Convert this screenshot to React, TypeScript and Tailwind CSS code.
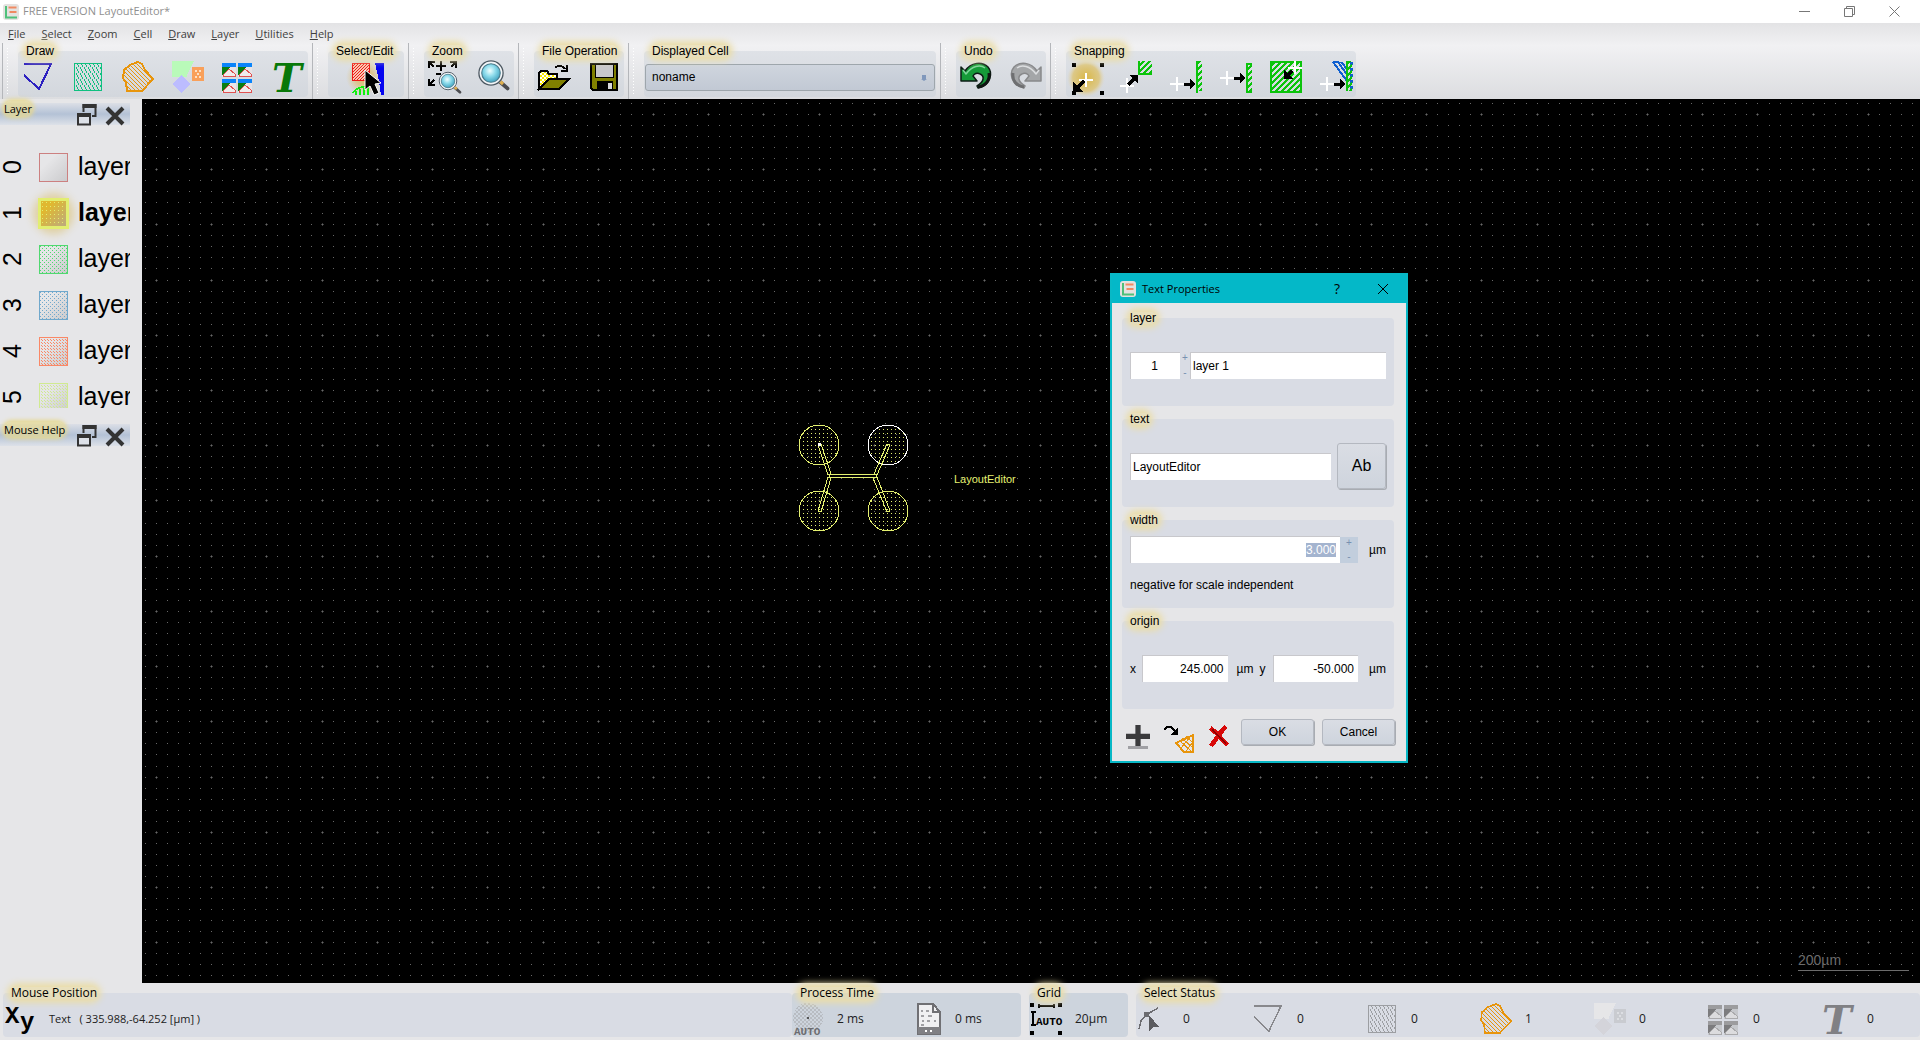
import React, { useEffect, useRef } from "react";

const ui = "font-['Liberation_Sans',Arial,sans-serif]";
const sys = "font-['Open_Sans','Noto_Sans',sans-serif]";

const PITCH = 11.045;

const dots: string[] = [];
const arms: string[] = [];
for (let j = 0; j < 120; j++) {
  for (let i = 0; i < 240; i++) {
    const x = Math.floor(3.4 + i * PITCH);
    const y = Math.floor(4.3 + j * PITCH);
    dots.push(`M${x} ${y}h1v1h-1z`);
    if (i % 5 === 1 && j % 5 === 1) {
      arms.push(`M${x - 1} ${y}h3v1h-3zM${x} ${y - 1}h1v3h-1z`);
    }
  }
}
const dotPath = dots.join("");
const armPath = arms.join("");

type IconProps = { children: React.ReactNode; className?: string };

const Icon = ({ children, className = "size-8" }: IconProps) => (
  <svg
    viewBox="0 0 32 32"
    fill="none"
    shapeRendering="crispEdges"
    aria-hidden="true"
    className={`shrink-0 overflow-visible ${className}`}
  >
    {children}
  </svg>
);

const Logo = () => (
  <svg viewBox="0 0 16 16" className="size-4 shrink-0" aria-hidden="true">
    <rect x="0" y="0" width="16" height="16" rx="3" fill="#e4e2e0" />
    <path d="M3 2v11.500h11" stroke="#4fc07a" strokeWidth="2" fill="none" />
    <path d="M5.500 3.500h8M6.500 8h7" stroke="#f08a62" strokeWidth="2" />
  </svg>
);

const Tri = ({ color, width }: { color: string; width: number }) => (
  <Icon>
    <path d="M2 3H29L17 28L2 14" stroke={color} strokeWidth={width} />
  </Icon>
);

const Hatch = ({ color, id }: { color: string; id: string }) => (
  <Icon>
    <pattern id={id} width="4" height="6" patternUnits="userSpaceOnUse">
      <path d="M0 0h1v2h-1zM1 2h1v2h-1zM2 4h1v2h-1z" fill={color} />
    </pattern>
    <rect x="2" y="2" width="28" height="28" fill={`url(#${id})`} />
    <rect x="2.5" y="2.5" width="27" height="27" stroke={color} />
  </Icon>
);

const Poly = ({ id, width }: { id: string; width: number }) => (
  <Icon>
    <pattern id={id} width="4" height="4" patternUnits="userSpaceOnUse">
      <path d="M0 0h1v1h-1zM1 1h1v1h-1zM2 2h1v1h-1zM3 3h1v1h-1z" fill="#e8950c" />
    </pattern>
    <path
      d="M2 9L8 4L16 1L20 3L23 9L31 18L20 30H5L4 22L1 17Z"
      fill={`url(#${id})`}
      stroke="#e8950c"
      strokeWidth={width}
    />
  </Icon>
);

const CellRef = ({ gray }: { gray?: boolean }) => (
  <Icon>
    <path d="M0 0H22L15 14V16H0Z" fill={gray ? "#e6e6e8" : "#b9fab9"} />
    <rect x="20" y="6" width="12" height="14" fill={gray ? "#c9cbd0" : "#f9a05a"} />
    <path
      d="M23 9h2v2h-2zM27 9h2v2h-2zM25 12h2v2h-2zM23 15h2v2h-2zM27 15h2v2h-2z"
      fill={gray ? "#dcdee2" : "#fde0c4"}
    />
    <path d="M9 14L18 23L9 32L0 23Z" fill={gray ? "#d4d4da" : "#bcbcff"} />
  </Icon>
);

const CellArray = ({ gray }: { gray?: boolean }) => (
  <Icon>
    {[
      [0, 2],
      [16, 2],
      [0, 18],
      [16, 18],
    ].map(([x, y]) => (
      <g key={`${x}-${y}`} transform={`translate(${x} ${y})`}>
        <rect width="14" height="14" fill={gray ? "#c6c8cc" : "#e8e4e6"} />
        <rect width="14" height="4" fill={gray ? "#9c9c9e" : "#0a84fa"} />
        <path d="M0 4H8L0 12Z" fill={gray ? "#7c7c7e" : "#0a7d12"} />
        <path
          d="M1 13H13V11L7 6L1 12Z"
          fill={gray ? "#dcdcde" : "#f0ecec"}
          stroke={gray ? "#aaaaac" : "#e05252"}
        />
      </g>
    ))}
  </Icon>
);

const TextT = ({ color }: { color: string }) => (
  <Icon>
    <text
      x="0"
      y="31"
      fontSize="40"
      fontWeight="bold"
      fontStyle="italic"
      fontFamily="DejaVu Serif, serif"
      fill={color}
    >
      T
    </text>
  </Icon>
);

const SelectIcon = () => (
  <Icon>
    <defs>
      <radialGradient id="selGlow">
        <stop offset="0" stopColor="#d8b860" />
        <stop offset="0.5" stopColor="#dcc07c" stopOpacity="0.8" />
        <stop offset="1" stopColor="#e0c890" stopOpacity="0" />
      </radialGradient>
      <pattern id="selHatch" width="3" height="3" patternUnits="userSpaceOnUse">
        <path d="M2 0h1v1h-1zM1 1h1v1h-1zM0 2h1v1h-1z" fill="#f01818" />
      </pattern>
    </defs>
    <circle cx="12" cy="16" r="18" fill="url(#selGlow)" />
    <rect x="0.5" y="2.5" width="17" height="17" fill="#f8c8b0" />
    <rect x="0.5" y="2.5" width="17" height="17" fill="url(#selHatch)" stroke="#f01818" />
    <path d="M23 2H32V34H29L27 20Z" fill="#0505f0" />
    <path d="M0 32Q8 24 16 26M4 30v4M8 28v6M12 27v7M16 26v8" stroke="#10f010" strokeWidth="1.5" />
    <path
      d="M13 9V29L18 25L22 34L27 32L23 23L29 22Z"
      fill="#000"
      stroke="#fff"
      strokeWidth="1"
      shapeRendering="auto"
    />
  </Icon>
);

const Lens = ({ x, y, r }: { x: number; y: number; r: number }) => (
  <g shapeRendering="auto">
    <path
      d={`M${x + r * 0.7} ${y + r * 0.7}L${x + r * 1.5} ${y + r * 1.4}`}
      stroke="#4c4c50"
      strokeWidth={r * 0.35}
      strokeLinecap="round"
    />
    <path
      d={`M${x + r * 0.8} ${y + r * 0.75}L${x + r * 1.1} ${y + r}`}
      stroke="#e0b050"
      strokeWidth={r * 0.3}
    />
    <circle cx={x} cy={y} r={r} fill="url(#lens)" stroke="#f4f6f8" strokeWidth={r * 0.3} />
    <circle cx={x} cy={y} r={r * 1.1} stroke="#4c5862" strokeWidth={r * 0.12} />
    <circle cx={x} cy={y} r={r * 0.84} stroke="#4c7c8c" strokeWidth={r * 0.1} />
  </g>
);

const ZoomFit = () => (
  <Icon>
    <defs>
      <radialGradient id="lens" cx="0.45" cy="0.4">
        <stop offset="0" stopColor="#f2ffff" />
        <stop offset="0.5" stopColor="#8edcec" />
        <stop offset="1" stopColor="#4aa8c4" />
      </radialGradient>
    </defs>
    <path
      d="M1 7V1H7M1 1L6 6M22 1H28V7M28 1L23 6M1 18V24H7M1 24L6 19M13 0V10M8 5H18M8 13H13"
      stroke="#000"
      strokeWidth="2"
    />
    <Lens x={20} y={20} r={8} />
  </Icon>
);

const ZoomIcon = () => (
  <Icon>
    <Lens x={13} y={12} r={11} />
  </Icon>
);

const OpenIcon = () => (
  <Icon>
    <pattern id="openDots" width="4" height="4" patternUnits="userSpaceOnUse">
      <rect width="4" height="4" fill="#fff" />
      <path d="M0 0h2v2h-2zM2 2h2v2h-2z" fill="#f8e800" />
    </pattern>
    <path d="M1 28V12L3 10H9L11 13H19V18H11L1 28Z" fill="url(#openDots)" stroke="#000" strokeWidth="2" />
    <path d="M1 28L11 18H31L21 28Z" fill="#808000" stroke="#000" strokeWidth="2" />
    <path d="M17 7Q22 2 27 8M29 4V10H23" stroke="#000" strokeWidth="2" />
  </Icon>
);

const SaveIcon = () => (
  <Icon>
    <path d="M3 3H29V29H5L3 27Z" fill="#808000" stroke="#000" strokeWidth="2" />
    <path d="M7 3H25V16H7Z" fill="#c8c8cc" stroke="#000" />
    <path d="M9 20H25V29H9Z" fill="#000" />
    <rect x="20" y="22" width="4" height="6" fill="#d8d8dc" />
  </Icon>
);

const UndoIcon = ({ redo }: { redo?: boolean }) => (
  <Icon>
    <g
      transform={redo ? "translate(32 0) scale(-1 1)" : undefined}
      shapeRendering="auto"
      strokeLinejoin="round"
    >
      <path
        d="M1 6L5 10C11 1 22 0 28 6C33 12 31 24 18 27L17 25C24 21 25 15 20 13C17 11 14 13 13 15L17 20H1Z"
        fill={redo ? "#a4a6a8" : "#159a38"}
        stroke={redo ? "#88898b" : "#0c1c14"}
        strokeWidth="1.5"
      />
      <path
        d="M3 9L6 13C12 5 20 3 25 7"
        stroke={redo ? "#dcdee0" : "#7fd49a"}
        strokeWidth="1.5"
      />
      <path d="M29 12C30 19 26 25 18 26" stroke={redo ? "#6e6f71" : "#101412"} strokeWidth="3" />
    </g>
  </Icon>
);

const GreenHatch = ({ id, color = "#0cc40c" }: { id: string; color?: string }) => (
  <pattern id={id} width="6" height="6" patternUnits="userSpaceOnUse">
    <path d="M0 6L6 0M-3 3L3 -3M3 9L9 3" stroke={color} strokeWidth="2" />
  </pattern>
);

const SnapGrid = () => (
  <Icon>
    <defs>
      <radialGradient id="snapGlow">
        <stop offset="0" stopColor="#dab848" />
        <stop offset="0.7" stopColor="#dcc888" />
        <stop offset="1" stopColor="#e0d8c0" stopOpacity="0" />
      </radialGradient>
    </defs>
    <circle cx="16" cy="17" r="19" fill="url(#snapGlow)" />
    <path d="M2 2h4v4h-4zM30 2h4v4h-4zM2 30h4v4h-4zM30 30h4v4h-4z" fill="#000" />
    <path d="M16 12V26M9 19H23" stroke="#fff" strokeWidth="2" />
    <path d="M14 20L6 28" stroke="#000" strokeWidth="3" />
    <path d="M3 21V31H13Z" fill="#000" />
  </Icon>
);

const SnapCorner = () => (
  <Icon>
    <GreenHatch id="snapCorner" />
    <rect x="18" y="0" width="14" height="14" fill="url(#snapCorner)" />
    <path d="M19 0V13H32" stroke="#0cc40c" strokeWidth="2" />
    <path d="M7 17V32M0 25H14" stroke="#fff" strokeWidth="2" />
    <path d="M8 24L14 18" stroke="#000" strokeWidth="3" />
    <path d="M9 14H18V23Z" fill="#000" />
  </Icon>
);

const SnapEdge = ({ y, short }: { y: number; short?: boolean }) => (
  <Icon>
    <GreenHatch id={short ? "edgeB" : "edgeA"} />
    <rect x="26" y={short ? 2 : 0} width="6" height="30" fill={short ? "url(#edgeB)" : "url(#edgeA)"} />
    <path d={short ? "M27 2V32M26 3H32M26 31H32" : "M27 0V32"} stroke="#0cc40c" strokeWidth="2" />
    <path d={`M7 ${y - 7}V${y + 7}M0 ${y}H14`} stroke="#fff" strokeWidth="2" />
    <path d={`M14 ${y}H20`} stroke="#000" strokeWidth="3" />
    <path d={`M20 ${y - 5}L26 ${y}L20 ${y + 5}Z`} fill="#000" />
  </Icon>
);

const SnapShape = () => (
  <Icon>
    <GreenHatch id="snapShape" />
    <rect x="1" y="1" width="30" height="30" fill="url(#snapShape)" stroke="#0cc40c" strokeWidth="2" />
    <path d="M25 0V13M18 7H32" stroke="#fff" strokeWidth="2" />
    <path d="M22 10L18 14" stroke="#000" strokeWidth="3" />
    <path d="M14 9V18H23Z" fill="#000" />
  </Icon>
);

const SnapCross = () => (
  <Icon>
    <GreenHatch id="snapCross" />
    <path d="M13 1L27 20M13 1H18L28 15M21 1L28 9" stroke="#1060d0" strokeWidth="2" />
    <path d="M31 1V30" stroke="#1060d0" strokeWidth="3" strokeDasharray="3 3" />
    <rect x="26" y="0" width="6" height="30" fill="url(#snapCross)" />
    <path d="M27 0V30" stroke="#0cc40c" strokeWidth="2" />
    <path d="M7 16V30M0 23H14" stroke="#fff" strokeWidth="2" />
    <path d="M14 23H20" stroke="#000" strokeWidth="3" />
    <path d="M20 18L26 23L20 28Z" fill="#000" />
  </Icon>
);

const Legend = ({ children, font = ui }: { children: React.ReactNode; font?: string }) => (
  <div className="relative z-10 -mb-2 ml-2 flex h-4 items-center">
    <span
      className={`rounded-lg bg-[#eadda9]/70 text-xs leading-3 whitespace-nowrap text-black shadow-[0_0_6px_4px_#eadda9] ${font}`}
    >
      {children}
    </span>
  </div>
);

const Tools = ({
  title,
  items,
  className = "px-1",
}: {
  title: string;
  items: [string, React.ReactNode][];
  className?: string;
}) => (
  <Bar title={title}>
    <div className={`flex gap-[18px] pt-2.5 ${className}`}>
      {items.map(([name, icon]) => (
        <button key={name} type="button" aria-label={name} className="size-8">
          {icon}
        </button>
      ))}
    </div>
  </Bar>
);

const Bar = ({ title, children }: { title: string; children: React.ReactNode }) => (
  <section className="flex border-l border-[#b4b6ba] pr-1">
    <div className="mt-1 mb-1 ml-[3px] w-3 bg-[radial-gradient(circle,#fff_1px,transparent_1px)] bg-size-[3px_3px] bg-repeat-y" />
    <div>
      <Legend>{title}</Legend>
      <div className="h-[46px] rounded-sm bg-linear-to-b from-[#dfe2e7] to-[#d3d7dd]">
        {children}
      </div>
    </div>
  </section>
);

const menus = ["File", "Select", "Zoom", "Cell", "Draw", "Layer", "Utilities", "Help"];

const layers = [
  { id: "0", color: "#cc8080", gap: 0 },
  { id: "1", color: "#e2ee70", gap: 4 },
  { id: "2", color: "#50d870", gap: 4 },
  { id: "3", color: "#70a8cc", gap: 4 },
  { id: "4", color: "#fa8866", gap: 3 },
  { id: "5", color: "#d0ea90", gap: 3 },
];

const Swatch = ({ id, color, gap }: { id: string; color: string; gap: number }) => {
  const on = id === "1";
  return (
    <div
      className={`ml-3.5 flex size-[31px] shrink-0 items-center justify-center ${
        on ? "rounded-full shadow-[0_0_8px_5px_#e0d0a0]" : ""
      }`}
    >
      <svg width="31" height="31" shapeRendering="crispEdges" aria-hidden="true">
        <defs>
          <linearGradient id={`sg${id}`} x2="1" y2="1">
            <stop offset="0.3" stopColor={on ? "#e0b830" : "#e6e6e8"} />
            <stop offset="1" stopColor={on ? "#b8a888" : "#cacacc"} />
          </linearGradient>
          {gap > 0 && (
            <pattern id={`sp${id}`} width={gap} height={gap} patternUnits="userSpaceOnUse">
              <rect width="1" height="1" fill={color} />
              {!on && <rect x={gap >> 1} y={gap >> 1} width="1" height="1" fill={color} />}
            </pattern>
          )}
        </defs>
        <rect x="1" y="1" width="29" height="29" fill={`url(#sg${id})`} />
        {gap > 0 && <rect x="1" y="1" width="29" height="29" fill={`url(#sp${id})`} />}
        <rect
          x="1.5"
          y="1.5"
          width="28"
          height="28"
          fill="none"
          stroke={color}
          strokeWidth={on ? 3 : 1}
        />
      </svg>
    </div>
  );
};

const DockHeader = ({ title }: { title: string }) => (
  <div className="flex h-[22px] items-start bg-linear-to-b from-[#dcdfe6] via-[#b4c2d6] to-[#dde1e8]">
    <h2
      className={`ml-1 flex-1 text-[11px] leading-[11px] font-medium whitespace-nowrap text-black ${sys}`}
    >
      <span className="rounded-lg bg-[#e6d890]/70 shadow-[0_0_4px_2px_#e6d890]">{title}</span>
    </h2>
    <button type="button" aria-label={`Float ${title}`}>
      <svg width="20" height="23" fill="none" aria-hidden="true">
        <path d="M6.500 9V2H18.500V13H15" stroke="#333" strokeWidth="2" />
        <path d="M5.500 3H19.500" stroke="#333" strokeWidth="4" />
        <path d="M1 12.500H13V21.500H1Z" fill="#dde1e8" stroke="#333" strokeWidth="2" />
        <path d="M0 12H14" stroke="#333" strokeWidth="4" />
      </svg>
    </button>
    <button type="button" aria-label={`Close ${title}`} className="mt-[3px] mr-[5px] ml-2">
      <svg width="20" height="20" aria-hidden="true">
        <path d="M2 2L18 18M18 2L2 18" stroke="#333" strokeWidth="4" />
      </svg>
    </button>
  </div>
);

const Dock = () => (
  <aside className="w-[142px] shrink-0 bg-[#e6e6e8] pt-1">
    <div className="w-[130px]">
      <DockHeader title="Layer" />
      <ul className={`mb-4 h-[283px] overflow-hidden pt-[19px] ${ui}`}>
        {layers.map((l) => (
          <li key={l.id} className="flex h-[46px] items-center text-[25px] text-black">
            <span className="w-6 shrink-0 -rotate-90 text-center leading-6">{l.id}</span>
            <Swatch {...l} />
            <span className={l.id === "1" ? "ml-[9px] font-bold" : "ml-[9px]"}>layer</span>
          </li>
        ))}
      </ul>
      <DockHeader title="Mouse Help" />
    </div>
  </aside>
);

const Drawing = () => (
  <svg
    className="absolute inset-0 size-full"
    shapeRendering="crispEdges"
    fill="none"
    aria-hidden="true"
  >
    <pattern id="fillDots" x="1" y="2" width="4" height="4" patternUnits="userSpaceOnUse">
      <rect width="1" height="1" fill="#e4f070" />
    </pattern>
    <path d={armPath} fill="#3c3c3c" />
    <path d={dotPath} fill="#686868" />
    {[
      [677, 346, "#e4f070"],
      [746, 346, "#ffffff"],
      [677, 412, "#e4f070"],
      [746, 412, "#e4f070"],
    ].map(([x, y, c]) => (
      <circle key={`${x}-${y}`} cx={x} cy={y} r="20" fill="url(#fillDots)" stroke={c as string} />
    ))}
    <path
      d="M676 346L686 376M679 345L689 375M676 412L686 378M679 413L689 379M745 345L732 375M748 346L735 376M731 379L745 413M735 378L748 412M686 375.500H735M686 378.500H735M676 346L679 345M745 345L748 346M676 412L679 413M745 413L748 412M687.500 375V379M734.500 375V379"
      stroke="#e4f070"
    />
    <rect x="676" y="344" width="3" height="3" fill="#fff" />
    <text x="812" y="384" fontSize="11" fontFamily="Liberation Sans, sans-serif" fill="#e4f070">
      LayoutEditor
    </text>
  </svg>
);

const field =
  "h-[27px] min-w-0 border-t border-l border-[#c8c8cc] bg-white pr-1 pl-0.5 text-xs text-black outline-none";

const Group = ({ title, children }: { title: string; children: React.ReactNode }) => (
  <fieldset className="min-w-0 pb-[5px]" aria-label={title}>
    <Legend>{title}</Legend>
    <div className="h-[88px] rounded-sm bg-[#d9dce4] px-2">{children}</div>
  </fieldset>
);

const Steps = ({ className }: { className: string }) => (
  <div className={`flex flex-col justify-between text-center leading-3 text-[#7890b0] ${className}`}>
    <button type="button" aria-label="Increase" className="text-[10px] leading-3">
      +
    </button>
    <button type="button" aria-label="Decrease" className="text-[10px] leading-3">
      -
    </button>
  </div>
);

const pushButton =
  "rounded-[3px] border border-[#b4b8c0] bg-linear-to-b from-[#dadde4] to-[#ced4dd] text-black shadow-[1px_1px_0_#a8acb2]";

const TextProperties = () => {
  const width = useRef<HTMLInputElement>(null);

  useEffect(() => {
    width.current?.focus({ preventScroll: true });
    width.current?.select();
  }, []);

  return (
    <div
      role="dialog"
      aria-label="Text Properties"
      className={`absolute top-[174px] left-[968px] w-[298px] border-2 border-[#08b8c6] bg-[#e6e6e8] pb-2 text-xs text-black ${ui}`}
    >
      <div className={`flex h-7 items-center bg-[#04b8c8] pl-2 ${sys}`}>
        <Logo />
        <h2 className="ml-1.5 flex-1 text-[11px]">Text Properties</h2>
        <button type="button" aria-label="Help" className="w-6 text-sm">
          ?
        </button>
        <button type="button" aria-label="Close dialog" className="mr-[17px] ml-7">
          <svg width="12" height="12" aria-hidden="true">
            <path d="M1 1L11 11M11 1L1 11" stroke="#000" />
          </svg>
        </button>
      </div>
      <div className="px-2.5 pt-[7px] pr-3">
        <Group title="layer">
          <div className="flex items-center pt-[34px]">
            <input aria-label="Layer number" defaultValue="1" className={`w-[50px] text-center ${field}`} />
            <Steps className="h-[27px] w-2.5" />
            <input aria-label="Layer name" defaultValue="layer 1" className={`flex-1 ${field}`} />
          </div>
        </Group>
        <Group title="text">
          <div className="flex items-center gap-1.5 pt-6">
            <input aria-label="Text" defaultValue="LayoutEditor" className={`flex-1 ${field}`} />
            <button type="button" className={`h-[46px] w-[49px] text-base ${pushButton}`}>
              Ab
            </button>
          </div>
        </Group>
        <Group title="width">
          <div className="flex items-center pt-4">
            <input
              ref={width}
              aria-label="Width"
              defaultValue="3.000"
              className={`flex-1 text-right selection:bg-[#a4b4cf] selection:text-white ${field}`}
            />
            <Steps className="h-[26px] w-[18px] bg-[#c2cedd]" />
            <span className="w-7 text-right">µm</span>
          </div>
          <p className="mt-3.5 leading-4">negative for scale independent</p>
        </Group>
        <Group title="origin">
          <div className="flex items-center pt-[34px]">
            <label htmlFor="ox" className="w-3">
              x
            </label>
            <input id="ox" defaultValue="245.000" className={`flex-1 text-right ${field}`} />
            <span className="w-[26px] text-right">µm</span>
            <label htmlFor="oy" className="w-[19px] pl-1.5">
              y
            </label>
            <input id="oy" defaultValue="-50.000" className={`flex-1 text-right ${field}`} />
            <span className="w-7 text-right">µm</span>
          </div>
        </Group>
      </div>
      <div className="flex items-start pt-[5px] pr-[11px] pl-3.5">
        <button type="button" aria-label="Add" className="mt-1.5 size-6">
          <Icon className="size-6">
            <path d="M16 0V28M0 15H32" stroke="#3a3a3c" strokeWidth="7" shapeRendering="auto" />
            <path d="M3 30H29" stroke="#a0a0a4" strokeWidth="3" />
          </Icon>
        </button>
        <button type="button" aria-label="Transform" className="mt-1.5 ml-3.5 h-7 w-[30px]">
          <svg
            width="30"
            height="28"
            fill="none"
            shapeRendering="crispEdges"
            className="overflow-visible"
            aria-hidden="true"
          >
            <path d="M0 5L3 2H7L12 7" stroke="#000" strokeWidth="2" />
            <path d="M14 2V10H6Z" fill="#000" />
            <path d="M29 10V27H20L12 18Z" stroke="#e8950c" strokeWidth="2" />
            <path d="M15 15L28 27M18 13L29 23M22 11L29 18M17 23L27 11M22 26L29 17" stroke="#e8950c" />
          </svg>
        </button>
        <button type="button" aria-label="Delete" className="mt-1.5 ml-3.5 size-6">
          <Icon className="size-6">
            <path d="M3 4L14 13L24 2M4 28L14 14L26 27" stroke="#d80808" strokeWidth="6" />
            <path d="M6 6L24 25" stroke="#8c0000" strokeWidth="2" />
          </Icon>
        </button>
        <div className="ml-auto flex gap-2">
          <button type="button" className={`h-[26px] w-[73px] ${pushButton}`}>
            OK
          </button>
          <button type="button" className={`h-[26px] w-[73px] ${pushButton}`}>
            Cancel
          </button>
        </div>
      </div>
    </div>
  );
};

const Status = ({
  title,
  className = "",
  tone = "bg-[#d9dce4]",
  children,
}: {
  title: string;
  className?: string;
  tone?: string;
  children: React.ReactNode;
}) => (
  <section className={className}>
    <Legend font={sys}>{title}</Legend>
    <div className={`flex h-11 items-center overflow-hidden rounded-sm pt-2 ${tone}`}>
      {children}
    </div>
  </section>
);

const selected: [string, React.ReactNode, string][] = [
  [
    "point",
    <Icon key="i">
      <path d="M1 26L3 18L8 12L20 5" stroke="#6c6c70" strokeWidth="1.500" />
      <rect x="6" y="9" width="5" height="5" fill="#6c6c70" />
      <path d="M11 12V28L15 24H21Z" fill="#5c5c60" />
    </Icon>,
    "0",
  ],
  ["path", <Tri key="i" color="#88888c" width={1.5} />, "0"],
  ["box", <Hatch key="i" color="#9c9ea2" id="hatchGray" />, "0"],
  ["polygon", <Poly key="i" id="polyStatus" width={1.5} />, "1"],
  ["cell", <CellRef key="i" gray />, "0"],
  ["array", <CellArray key="i" gray />, "0"],
  ["text", <TextT key="i" color="#808084" />, "0"],
];

const StatusBar = () => (
  <footer className={`flex h-[57px] bg-[#e6e6e8] pt-0.5 pl-[3px] text-xs text-[#202020] ${sys}`}>
    <Status title="Mouse Position" className="flex-1">
      <Icon className="ml-[3px] size-8">
        <text x="-1" y="20" fontSize="24" fontFamily="Liberation Mono, monospace" fontWeight="bold" fill="#000">
          X
        </text>
        <text x="14" y="26" fontSize="24" fontFamily="Liberation Mono, monospace" fontWeight="bold" fill="#000">
          y
        </text>
      </Icon>
      <span className="ml-[11px] text-[11px] whitespace-pre">
        {"Text   ( 335.988,-64.252 [µm] )"}
      </span>
    </Status>
    <Status title="Process Time" className="w-[229px]" tone="bg-[#cdd4dd]">
      <Icon>
        <pattern id="clock" width="4" height="4" patternUnits="userSpaceOnUse">
          <path d="M0 0h2v2h-2zM2 2h2v2h-2z" fill="#b8bcc2" />
        </pattern>
        <circle cx="16" cy="15" r="15" fill="url(#clock)" />
        <rect x="15" y="14" width="2" height="2" fill="#555" />
        <text x="2" y="32" fontSize="11" fontWeight="bold" fontFamily="Liberation Mono, monospace" fill="#6c6c70">
          AUTO
        </text>
      </Icon>
      <span className="ml-[13px] w-[73px]">2 ms</span>
      <Icon>
        <path d="M8 1H23L30 9V31H8Z" fill="#f0f0f2" stroke="#707074" strokeWidth="2" />
        <path d="M23 1V9H30" stroke="#707074" strokeWidth="2" />
        <path d="M11 8h2M16 8h3M11 13h3M18 13h4M12 18h2M17 18h3M24 18h2M11 22h3" stroke="#a0a0a4" strokeWidth="2" />
        <path d="M8 24H30V31H8Z" fill="#808084" />
        <path d="M15 28h2M20 28h2" stroke="#fff" strokeWidth="2" />
      </Icon>
      <span className="ml-[13px]">0 ms</span>
    </Status>
    <Status title="Grid" className="ml-2 w-[99px]" tone="bg-[#cdd4dd]">
      <Icon className="ml-px size-8">
        <path d="M0 0h4v4h-4zM28 0h4v4h-4zM0 28h4v4h-4zM28 28h4v4h-4z" fill="#000" />
        <path d="M8 3H25M3 9V23M9 1V5M24 1V5M1 9H6M1 22H6" stroke="#000" strokeWidth="2" />
        <text x="6" y="22" fontSize="11" fontWeight="bold" fontFamily="Liberation Mono, monospace" fill="#000">
          AUTO
        </text>
      </Icon>
      <span className="ml-[13px]">20µm</span>
    </Status>
    <Status title="Select Status" className="ml-2 w-[784px]">
      {selected.map(([name, icon, count]) => (
        <div key={name} className="flex w-[114px] shrink-0 items-center pl-0.5">
          {icon}
          <span className="ml-[13px]">{count}</span>
        </div>
      ))}
    </Status>
  </footer>
);

const App = () => {
  return (
    <div className="flex h-screen flex-col overflow-hidden bg-[#e6e6e8]">
      <header className={`flex h-[23px] shrink-0 items-center bg-white pl-[3px] text-[11px] text-[#909090] ${sys}`}>
        <Logo />
        <h1 className="ml-1 flex-1">FREE VERSION LayoutEditor*</h1>
        <div className="flex items-center gap-[34px] pr-5">
          <button type="button" aria-label="Minimize">
            <svg width="11" height="11" aria-hidden="true">
              <path d="M0 5.500H11" stroke="#777" />
            </svg>
          </button>
          <button type="button" aria-label="Restore">
            <svg width="11" height="11" fill="none" aria-hidden="true">
              <path d="M0.500 2.500H8.500V10.500H0.500ZM2.500 2V0.500H10.500V8.500H9" stroke="#777" />
            </svg>
          </button>
          <button type="button" aria-label="Close">
            <svg width="11" height="11" aria-hidden="true">
              <path d="M0.500 0.500L10.500 10.500M10.500 0.500L0.500 10.500" stroke="#777" />
            </svg>
          </button>
        </div>
      </header>

      <div className="shrink-0 bg-linear-to-b from-[#e3e3e5] via-[#f1f1f3] via-30% to-[#dcdde0]">
        <nav className={`flex h-5 items-center gap-4 pt-0.5 pl-2 text-[11px] text-[#404040] ${sys}`}>
          {menus.map((m) => (
            <button key={m} type="button" className="first-letter:underline">
              {m}
            </button>
          ))}
        </nav>
        <div className="flex h-14 pl-0.5">
          <Tools
            title="Draw"
            items={[
              ["Path", <Tri color="#2c20c0" width={2} />],
              ["Box", <Hatch color="#10c080" id="hatchGreen" />],
              ["Polygon", <Poly id="polyTool" width={2} />],
              ["Cell reference", <CellRef />],
              ["Cell array", <CellArray />],
              ["Text", <TextT color="#087808" />],
            ]}
          />
          <Tools title="Select/Edit" className="pr-5 pl-6" items={[["Select", <SelectIcon />]]} />
          <Tools title="Zoom" items={[["Fit", <ZoomFit />], ["Zoom", <ZoomIcon />]]} />
          <Tools title="File Operation" items={[["Open", <OpenIcon />], ["Save", <SaveIcon />]]} />
          <Bar title="Displayed Cell">
            <div className="w-[292px] px-px pt-3">
              <div className="relative">
                <select
                  aria-label="Displayed Cell"
                  className={`h-[27px] w-full appearance-none rounded-[3px] border border-[#9ea6ac] bg-linear-to-b from-[#cfd5de] to-[#c2c9d4] px-1.5 text-xs text-black ${ui}`}
                >
                  <option>noname</option>
                </select>
                <svg width="6" height="6" className="absolute top-3 right-2" aria-hidden="true">
                  <path d="M1 0H5V4H6L3 6L0 4H1Z" fill="#8098bc" />
                </svg>
              </div>
            </div>
          </Bar>
          <Tools title="Undo" items={[["Undo", <UndoIcon />], ["Redo", <UndoIcon redo />]]} />
          <Tools
            title="Snapping"
            items={[
              ["Snap grid", <SnapGrid />],
              ["Snap corner", <SnapCorner />],
              ["Snap edge", <SnapEdge y={23} />],
              ["Snap center", <SnapEdge y={17} short />],
              ["Snap shape", <SnapShape />],
              ["Snap crossing", <SnapCross />],
            ]}
          />
        </div>
      </div>

      <div className="flex min-h-0 flex-1">
        <Dock />
        <main className="relative min-w-0 flex-1 overflow-hidden bg-black">
          <Drawing />
          <div
            className={`absolute right-[11px] bottom-3 w-[111px] border-b border-[#6c6c6c] text-sm leading-5 text-[#6c6c6c] ${ui}`}
          >
            200µm
          </div>
          <TextProperties />
        </main>
      </div>

      <StatusBar />
    </div>
  );
};

export default App;
